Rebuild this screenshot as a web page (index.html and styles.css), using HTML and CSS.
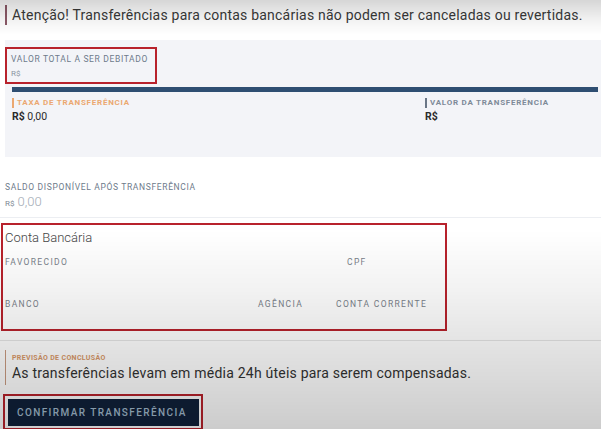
FILE: index.html
```html
<!DOCTYPE html>
<html lang="pt-BR">
<head>
<meta charset="utf-8">
<title>Transferência</title>
<link rel="stylesheet" href="styles.css">
</head>
<body>
<div class="page">
  <div class="alert">Atenção! Transferências para contas bancárias não podem ser canceladas ou revertidas.</div>

  <section class="panel">
    <div class="total mark">
      <div class="label">VALOR TOTAL A SER DEBITADO</div>
      <div class="small-value">R$</div>
    </div>
    <div class="bar"></div>
    <div class="split">
      <div class="col">
        <div class="tag tag-orange">TAXA DE TRANSFERÊNCIA</div>
        <div class="money"><b>R$</b> 0,00</div>
      </div>
      <div class="col col-right">
        <div class="tag tag-blue">VALOR DA TRANSFERÊNCIA</div>
        <div class="money"><b>R$</b></div>
      </div>
    </div>
  </section>

  <section class="saldo">
    <div class="label">SALDO DISPONÍVEL APÓS TRANSFERÊNCIA</div>
    <div class="saldo-value"><span class="cur">R$</span> 0,00</div>
  </section>

  <section class="conta mark">
    <div class="conta-title">Conta Bancária</div>
    <div class="conta-row">
      <span class="field f-fav">FAVORECIDO</span>
      <span class="field f-cpf">CPF</span>
    </div>
    <div class="conta-row">
      <span class="field f-banco">BANCO</span>
      <span class="field f-ag">AGÊNCIA</span>
      <span class="field f-cc">CONTA CORRENTE</span>
    </div>
  </section>

  <section class="previsao">
    <div class="prev-label">PREVISÃO DE CONCLUSÃO</div>
    <div class="prev-text">As transferências levam em média 24h úteis para serem compensadas.</div>
  </section>

  <div class="btn-wrap mark">
    <button class="btn">CONFIRMAR TRANSFERÊNCIA</button>
  </div>
</div>
<div class="vignette"></div>
</body>
</html>
```

FILE: styles.css
```css
html, body {
  margin: 0;
  padding: 0;
  background: #ffffff;
}
body {
  width: 601px;
  height: 429px;
  overflow: hidden;
  font-family: Roboto, "DejaVu Sans", sans-serif;
  color: #333;
}
.page {
  display: flex;
  flex-direction: column;
}
.mark {
  border: 2px solid #b8222c;
}
.alert {
  margin: 5px 0 0 5px;
  border-left: 2px solid #8c5a68;
  padding: 1px 0 0 5px;
  height: 19px;
  line-height: 19px;
  font-size: 14px;
  letter-spacing: 0.22px;
  color: #3a3a3a;
  white-space: nowrap;
}
.panel {
  margin: 15px 0 0 5px;
  background: #f3f4f8;
  height: 117px;
  padding-top: 7px;
  box-sizing: border-box;
  display: flex;
  flex-direction: column;
}
.total {
  width: 152px;
  height: 37px;
  box-sizing: border-box;
  padding: 4px 0 0 4px;
}
.label {
  font-size: 8.5px;
  letter-spacing: 0.65px;
  color: #6d7a8a;
  line-height: 12px;
}
.small-value {
  font-size: 8px;
  color: #8a94a2;
  line-height: 14px;
  margin-top: 2px;
}
.bar {
  margin: 3px 3px 0 7px;
  height: 5px;
  background: #2e4e72;
}
.split {
  display: flex;
  margin: 6px 0 0 7px;
}
.col {
  width: 413px;
}
.col-right {
  width: auto;
}
.tag {
  font-size: 8px;
  font-weight: bold;
  letter-spacing: 0.75px;
  line-height: 10px;
  padding-left: 3px;
  border-left: 2px solid;
}
.tag-orange {
  color: #eba870;
  border-color: #eba870;
}
.tag-blue {
  color: #7e8a98;
  border-color: #6a7686;
}
.money {
  margin-top: 3px;
  font-size: 10.5px;
  color: #2a2a2a;
  line-height: 12px;
}
.money b {
  font-weight: bold;
}
.saldo {
  padding: 24px 0 0 5px;
  height: 61px;
  box-sizing: border-box;
  border-bottom: 1px solid #eceef2;
}
.saldo-value {
  font-size: 13px;
  color: #a4acb6;
  line-height: 16px;
  margin-top: 1px;
  font-weight: 300;
}
.saldo-value .cur {
  font-size: 8px;
  font-weight: 400;
  color: #7e8894;
}
.conta {
  margin: 5px 0 0 1px;
  width: 446px;
  height: 108px;
  box-sizing: border-box;
  padding: 5px 0 0 2px;
}
.conta-title {
  font-size: 13px;
  color: #444;
  line-height: 16px;
  font-weight: 300;
}
.conta-row {
  display: grid;
  grid-template-columns: 253px 78px 110px;
  margin-top: 11px;
  font-size: 8.5px;
  letter-spacing: 1.35px;
  color: #7a818a;
  line-height: 10px;
}
.conta-row + .conta-row {
  margin-top: 32px;
}
.f-fav { grid-column: 1 / 3; }
.f-cpf { grid-column: 3; padding-left: 11px; }
.f-cc { grid-column: 3; }
.previsao {
  margin: 9px 0 0 0;
  border-top: 1px solid #e6e6e6;
  padding: 9px 0 0 0;
}
.previsao > div {
  margin-left: 5px;
  padding-left: 6px;
  border-left: 1px solid #c89a80;
}
.prev-label {
  font-size: 7px;
  font-weight: bold;
  letter-spacing: 0.35px;
  color: #d99868;
  line-height: 12px;
  padding-top: 2px;
}
.prev-text {
  font-size: 14px;
  letter-spacing: 0.22px;
  color: #333;
  line-height: 18px;
  padding-bottom: 3px;
}
.btn-wrap {
  margin: 9px 0 0 3px;
  width: 200px;
  box-sizing: border-box;
  padding: 3px 2px 0 3px;
  height: 36px;
}
.btn {
  display: block;
  width: 191px;
  height: 27px;
  border: none;
  background: #10213a;
  color: #a3bccf;
  font-family: Roboto, "DejaVu Sans", sans-serif;
  font-size: 10px;
  font-weight: 500;
  letter-spacing: 1.4px;
  text-align: left;
  padding: 0 0 0 9px;
}
.vignette {
  position: fixed;
  inset: 0;
  pointer-events: none;
  background:
    linear-gradient(to bottom, rgba(0,0,0,0.16) 0px, rgba(0,0,0,0.05) 20px, rgba(0,0,0,0) 35px, rgba(0,0,0,0) 230px, rgba(0,0,0,0.05) 290px, rgba(0,0,0,0.2) 429px);
}
```
